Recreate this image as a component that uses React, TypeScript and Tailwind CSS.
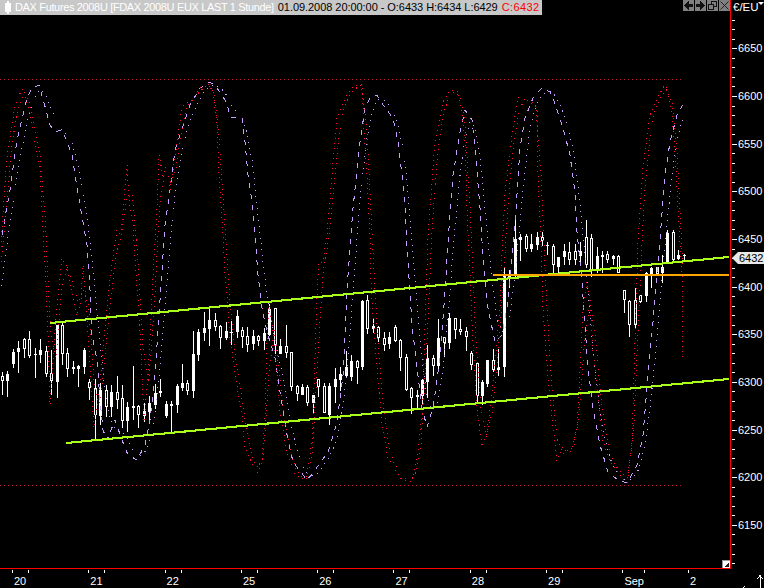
type Pt = [number, number];
type Bar = [number, number, number, number, number, number];

// candles as read off the chart: [x, wickTop, wickBottom, bodyTop, bodyBottom, hollow]
const scale = (x0: number, y0: number, rows: Bar[]): Bar[] =>
  rows.map(([x, a, b, c, d, h]) => [
    Math.floor(x0 + x / 3),
    y0 + a / 3,
    y0 + b / 3,
    y0 + c / 3,
    y0 + d / 3,
    h,
  ]);

const bars: Bar[] = [
  ...scale(0, 300, [
    [4, 217, 285, 228, 243, 1], [19, 213, 291, 222, 243, 0], [37, 148, 204, 155, 192, 0], [52, 123, 219, 143, 156, 0],
    [70, 115, 174, 117, 147, 1], [85, 93, 173, 117, 167, 1], [103, 143, 234, 162, 165, 0], [118, 117, 190, 150, 165, 0],
    [136, 138, 231, 153, 222, 1], [151, 150, 285, 219, 243, 1], [169, 75, 294, 75, 246, 0], [184, 66, 195, 75, 162, 1],
    [199, 144, 231, 159, 207, 1], [217, 183, 222, 201, 207, 0], [232, 195, 261, 198, 207, 0], [250, 144, 222, 150, 201, 0],
    [265, 237, 300, 246, 264, 1], [283, 237, 420, 264, 345, 1], [298, 250, 375, 270, 348, 0], [316, 255, 351, 270, 321, 1],
    [331, 255, 351, 276, 321, 0], [349, 228, 327, 276, 300, 1], [364, 255, 384, 294, 363, 1], [379, 306, 396, 321, 363, 0],
    [397, 198, 360, 318, 324, 0], [412, 315, 384, 318, 345, 1], [430, 309, 366, 333, 348, 0], [445, 288, 366, 309, 336, 0],
    [463, 252, 327, 279, 315, 0], [478, 237, 291, 273, 279, 0], [496, 303, 354, 312, 348, 0], [511, 303, 396, 312, 318, 0],
    [529, 252, 339, 258, 315, 0], [544, 192, 273, 249, 264, 0], [559, 240, 285, 249, 273, 1], [577, 93, 294, 162, 273, 0],
    [592, 87, 183, 96, 165, 0], [610, 36, 123, 84, 99, 0], [625, 27, 138, 60, 87, 0], [643, 39, 93, 60, 81, 1],
    [658, 75, 147, 78, 114, 1], [676, 66, 120, 93, 114, 0], [691, 63, 135, 96, 99, 0], [709, 30, 114, 48, 96, 0],
    [724, 81, 144, 90, 111, 1], [739, 81, 156, 108, 135, 1], [757, 90, 150, 108, 132, 0], [772, 105, 138, 108, 123, 1],
  ]),
  ...scale(250, 290, [
    [40, 114, 180, 129, 153, 0], [55, 42, 138, 57, 135, 0], [73, 54, 192, 54, 165, 1], [88, 147, 192, 168, 192, 0],
    [106, 105, 204, 168, 189, 1], [121, 186, 303, 186, 291, 1], [139, 285, 333, 288, 312, 1], [154, 282, 315, 291, 315, 0],
    [169, 285, 348, 291, 339, 1], [187, 315, 369, 315, 339, 0], [202, 267, 321, 267, 291, 1], [220, 279, 369, 288, 369, 1],
    [235, 279, 405, 288, 375, 0], [253, 234, 339, 267, 291, 0], [268, 231, 303, 252, 270, 0], [286, 183, 261, 231, 258, 0],
    [301, 195, 273, 213, 261, 0], [319, 210, 282, 213, 234, 1], [334, 30, 240, 33, 231, 0], [349, 15, 132, 30, 117, 1],
    [367, 87, 129, 108, 117, 0], [382, 108, 156, 111, 144, 1], [400, 126, 183, 144, 165, 1], [415, 126, 177, 141, 162, 0],
    [433, 105, 156, 111, 153, 1], [448, 147, 243, 150, 204, 1], [466, 192, 303, 201, 300, 1], [481, 291, 372, 294, 324, 1],
    [499, 300, 360, 315, 321, 0], [514, 267, 345, 270, 318, 0], [529, 165, 324, 204, 276, 0], [547, 195, 258, 204, 228, 1],
    [562, 87, 237, 144, 228, 0], [580, 141, 201, 141, 159, 1], [595, 69, 177, 84, 159, 0], [613, 84, 147, 84, 120, 1],
    [628, 87, 135, 117, 126, 1], [646, 111, 183, 123, 141, 1], [661, 183, 240, 189, 225, 1], [679, 219, 340, 219, 318, 1],
    [694, 270, 345, 276, 318, 0], [709, 210, 291, 210, 282, 0], [727, 177, 246, 210, 240, 1], [742, 177, 258, 231, 240, 0],
  ]),
  ...scale(480, 210, [
    [69, 174, 501, 198, 471, 0], [85, 180, 234, 198, 207, 0], [103, 20, 205, 87, 193, 0], [118, 72, 153, 81, 90, 0],
    [136, 72, 126, 78, 117, 1], [151, 72, 126, 102, 117, 0], [169, 66, 120, 81, 105, 0], [184, 66, 108, 81, 93, 1],
    [199, 96, 135, 105, 108, 0], [217, 102, 190, 108, 165, 1], [232, 141, 190, 141, 171, 0], [250, 102, 165, 123, 141, 0],
    [265, 96, 165, 126, 150, 1], [283, 102, 165, 123, 150, 1], [298, 96, 165, 123, 138, 0], [316, 30, 175, 81, 165, 1],
    [331, 72, 200, 84, 180, 1], [349, 111, 190, 138, 180, 0], [364, 123, 190, 135, 141, 0], [379, 123, 160, 132, 150, 1],
    [397, 135, 165, 138, 147, 0], [412, 135, 190, 138, 190, 1], [430, 240, 310, 240, 270, 1], [445, 270, 380, 273, 345, 1],
    [463, 235, 355, 270, 345, 1], [478, 255, 280, 255, 275, 1], [496, 185, 275, 188, 258, 0], [511, 170, 235, 174, 192, 0],
    [529, 170, 195, 170, 192, 1], [544, 135, 218, 172, 190, 0], [559, 60, 160, 69, 160, 0], [577, 60, 155, 66, 150, 1],
    [592, 120, 150, 135, 147, 0], [610, 132, 155, 135, 138, 0],
  ]),
];

const redTrace: Pt[] = [
  [-6, 300], [1, 247], [4, 198], [7, 158], [10, 138], [15, 105], [22, 89], [24, 90], [28, 107], [33, 132], [40, 168], [42, 208], [44, 248], [46, 282], [48, 335], [50, 405],
  [56, 318], [62, 258], [66, 265], [72, 290], [77, 316], [81, 300], [83, 265], [87, 315], [90, 365], [94, 428], [100, 382], [107, 308], [112, 262], [117, 230], [121, 236], [127, 165], [129, 200], [133, 225], [136, 275], [139, 310], [142, 375], [144, 422],
  [148, 375], [153, 275], [157, 208], [159, 155], [163, 176], [167, 176], [170, 190], [175, 158], [182, 107], [190, 100], [200, 88], [208, 83], [213, 92], [217, 125], [219, 175], [222, 218], [225, 275], [228, 308], [230, 338],
  [233, 358], [238, 392], [242, 415], [245, 448], [252, 463], [257, 473], [262, 462], [265, 415], [267, 342], [269, 305], [273, 332], [277, 375], [280, 412], [287, 452], [295, 475], [306, 480], [312, 442], [315, 358], [317, 295], [319, 262], [323, 262], [327, 235], [332, 175], [337, 118], [345, 98], [353, 87], [362, 84], [364, 132], [367, 175], [370, 235], [371, 282], [373, 315], [377, 368], [382, 425], [388, 458], [402, 480], [412, 482], [418, 452], [422, 415], [425, 325], [428, 235], [435, 142], [443, 102], [450, 90], [458, 92], [462, 115], [465, 142], [467, 208], [470, 275], [472, 325], [477, 408], [482, 447], [487, 432], [493, 385], [500, 308], [502, 255], [505, 192], [512, 135], [518, 97], [530, 102], [537, 108], [538, 175], [541, 242], [543, 308], [547, 365], [552, 418], [557, 461], [563, 447], [570, 455], [577, 428], [583, 308], [587, 282], [590, 302], [593, 352], [597, 385], [603, 442], [612, 465], [627, 483], [632, 442], [638, 242], [643, 168], [650, 115], [657, 98], [665, 85], [668, 92], [672, 115], [675, 152], [678, 208], [682, 275], [683, 357],
];

const purpleTrace: Pt[] = [
  [-8, 320], [2, 235], [10, 190], [17, 140], [27, 98], [32, 88], [39, 85], [46, 110], [50, 125], [55, 132], [61, 130], [65, 137], [72, 155], [75, 175], [80, 205], [87, 245], [90, 290], [92, 335], [97, 360], [100, 400], [103, 430], [107, 440], [115, 420], [122, 440], [128, 455], [137, 460], [145, 445], [150, 420], [155, 375], [160, 300], [165, 225], [170, 190], [175, 150], [185, 120], [190, 105], [200, 88], [210, 82], [217, 88], [227, 103], [230, 117], [242, 118], [245, 142], [248, 175], [252, 202], [255, 235], [258, 275], [262, 308], [267, 332], [275, 358], [280, 392], [287, 435], [293, 462], [307, 480], [313, 473], [320, 463], [328, 452], [337, 422], [343, 375], [348, 275], [353, 208], [360, 142], [365, 108], [370, 98], [377, 95], [383, 105], [393, 118], [398, 142], [402, 175], [405, 208], [407, 248], [410, 292], [412, 325], [417, 368], [422, 408], [427, 427], [433, 408], [440, 358], [445, 292], [448, 242], [453, 175], [460, 132], [465, 110], [472, 120], [475, 148], [480, 208], [483, 258], [488, 308], [495, 342], [502, 335], [507, 308], [515, 225], [520, 148], [525, 118], [533, 98], [542, 88], [550, 92], [553, 98], [563, 128], [570, 155], [575, 192], [577, 232], [582, 282], [585, 325], [588, 368], [593, 408], [600, 445], [608, 472], [618, 480], [627, 483], [637, 465], [643, 435], [648, 375], [653, 322], [658, 265], [665, 175], [670, 142], [677, 115], [683, 104],
];

// the slower line of each pair is the faster one averaged over the last few bars
const yAt = (trace: Pt[], x: number) => {
  for (let i = 1; i < trace.length; i++) {
    if (x <= trace[i][0]) {
      const [x0, y0] = trace[i - 1];
      const [x1, y1] = trace[i];
      return y0 + ((y1 - y0) * (x - x0)) / (x1 - x0 || 1);
    }
  }
  return trace[trace.length - 1][1];
};

const slow = (trace: Pt[], n: number): Pt[] => {
  const out: Pt[] = [];
  for (let x = 1.5; x <= 684; x += 5.45) {
    let sum = 0;
    for (let k = 0; k < n; k++) sum += yAt(trace, x - k * 5.45);
    out.push([x, sum / n]);
  }
  return out;
};

const toPoints = (trace: Pt[]) => trace.map(([x, y]) => `${x},${y}`).join(" ");

const days = ["20", "21", "22", "25", "26", "27", "28", "29"];

const ticks: number[] = [];
for (let p = 6680; p >= 6110; p -= 10) ticks.push(p);

const Chart = () => (
  <svg width="730" height="568" className="block" shapeRendering="crispEdges" fill="none">
    {bars.map(([x, a, b, c, d, h]) => (
      <g key={x}>
        <rect x={x + 1} y={a} width="1" height={b - a} fill="#fff" />
        <rect x={x} y={c} width="3" height={Math.max(d - c, 1)} fill="#fff" />
        {h === 1 && d - c > 2 && <rect x={x + 1} y={c + 1} width="1" height={d - c - 2} fill="#000" />}
      </g>
    ))}
    <line x1="0" y1="79.5" x2="683" y2="79.5" stroke="#c8143c" strokeDasharray="1 3" />
    <line x1="0" y1="485.5" x2="683" y2="485.5" stroke="#c8143c" strokeDasharray="1 3" />
    <polyline points={toPoints(slow(purpleTrace, 3))} stroke="#c8a0ff" strokeDasharray="1 5" />
    <polyline points={toPoints(purpleTrace.filter(([x]) => x >= 0))} stroke="#c8a0ff" strokeDasharray="5 6" />
    <polyline points={toPoints(slow(redTrace, 2))} stroke="#ff0a3c" strokeDasharray="1 4" />
    <polyline points={toPoints(redTrace.filter(([x]) => x >= 0))} stroke="#ff0a3c" strokeDasharray="1 4" />
    <line x1="50" y1="323" x2="729" y2="257" stroke="#aaff1a" strokeWidth="2.1" />
    <line x1="66" y1="443" x2="729" y2="379" stroke="#aaff1a" strokeWidth="2.1" />
    <line x1="493" y1="275" x2="729" y2="275" stroke="#ffa500" strokeWidth="2" />
  </svg>
);

const WinButton = ({ children }: { children: React.ReactNode }) => (
  <div className="flex h-[11px] w-[11px] items-center justify-center bg-[#808080]">{children}</div>
);

export default function App() {
  return (
    <div className="flex h-[588px] w-[764px] flex-col overflow-hidden bg-black font-['Liberation_Sans',sans-serif] text-[11px] leading-none text-white">
      <div className="flex h-[569px] shrink-0">
        {/* plot area */}
        <div className="relative h-[569px] w-[731px] shrink-0 border-r border-b border-[#ff0000]">
          <Chart />

          <div className="absolute top-0 left-0 flex h-[15px] w-[542px] items-center overflow-hidden whitespace-nowrap bg-[#c8c8c8] pl-[5px]">
            <svg width="7" height="13" className="mr-[3px] shrink-0" shapeRendering="crispEdges">
              <rect x="0" y="2" width="6" height="9" fill="#fff" />
              <rect x="2" y="0" width="2" height="13" fill="#fff" />
            </svg>
            <span className="tracking-[-0.35px]">DAX Futures 2008U [FDAX 2008U EUX LAST 1 Stunde]</span>
            <span className="ml-[4px] tracking-[-0.05px] text-black">01.09.2008 20:00:00 - O:6433 H:6434 L:6429</span>
            <span className="ml-[4px] tracking-[0.4px] text-[#ff0000]">C:6432</span>
          </div>

          <div className="absolute top-0 right-0 flex gap-px">
            <WinButton>
              <svg width="9" height="9" viewBox="0 0 9 9" shapeRendering="crispEdges">
                <path d="M0 4h1V3h1V2h1V1h1V0h1v3h4v3H5v3H4V8H3V7H2V6H1V5H0z" fill="#111" />
              </svg>
            </WinButton>
            <WinButton>
              <svg width="9" height="9" viewBox="0 0 9 9" shapeRendering="crispEdges">
                <path d="M9 4H8V3H7V2H6V1H5V0H4v3H0v3h4v3h1V8h1V7h1V6h1V5h1z" fill="#111" />
              </svg>
            </WinButton>
            <WinButton>
              <svg width="9" height="9" viewBox="0 0 9 9" fill="none" stroke="#111" shapeRendering="crispEdges">
                <rect x="3.5" y="0.5" width="5" height="5" />
                <rect x="0.5" y="3.5" width="5" height="5" fill="#808080" />
              </svg>
            </WinButton>
            <WinButton>
              <svg width="9" height="9" viewBox="0 0 9 9" stroke="#222">
                <path d="M0.5 0.5l8 8M8.5 0.5l-8 8" />
              </svg>
            </WinButton>
          </div>

          <div className="absolute right-0 bottom-0 h-[8px] w-[8px] bg-white">
            <svg width="8" height="8" viewBox="0 0 8 8" className="block" shapeRendering="crispEdges">
              <path d="M0 0h8v1H1v7H0z" fill="#999" />
              <path d="M2 7l5-5v5z" fill="#222" />
            </svg>
          </div>
        </div>

        {/* price axis */}
        <div className="relative flex w-[33px] shrink-0 flex-col overflow-hidden">
          <div className="flex h-[15.5px] shrink-0 items-start pt-[2px] pl-[2px] text-[11.5px]">€/EU</div>
          <div className="absolute top-[2px] right-0 h-0 w-0 border-x-[3px] border-t-[3px] border-x-transparent border-t-white" />
          {ticks.map((p) => (
            <div key={p} className="flex h-[9.54px] shrink-0 items-center pl-px">
              {p % 50 === 0 ? (
                <>
                  <div className="h-px w-[5px] bg-white" />
                  <span className="pl-px">{p}</span>
                </>
              ) : (
                <div className="h-px w-[3px] bg-white" />
              )}
            </div>
          ))}
          <div className="absolute top-[252px] left-px flex h-[12px] w-[34px] items-center bg-[#e8e8e8] pl-[7px] text-black [clip-path:polygon(0_50%,6px_0,100%_0,100%_100%,6px_100%)]">
            6432
          </div>
        </div>
      </div>

      {/* time axis */}
      <div className="relative flex pl-[12px]">
        {days.map((d) => (
          <div key={d} className="w-[76.3px] shrink-0">
            <div className="mt-px flex h-[3px] gap-[15px]">
              <div className="w-px bg-white" />
              <div className="w-px bg-white" />
            </div>
            <div className="mt-[3px] pl-[2px]">{d}</div>
          </div>
        ))}
        <div className="w-[65.6px] shrink-0">
          <div className="mt-px flex h-[3px] gap-[21px]">
            <div className="w-px bg-white" />
            <div className="w-px bg-white" />
          </div>
          <div className="mt-[3px] pl-[2px]">Sep</div>
        </div>
        <div className="w-[40px] shrink-0">
          <div className="mt-px h-[3px] w-px bg-white" />
          <div className="mt-[3px] pl-[2px]">2</div>
        </div>
        <svg width="6" height="14" viewBox="0 0 6 14" className="absolute top-[6px] right-[1px]" fill="none" stroke="#fff" shapeRendering="crispEdges">
          <path d="M3 14V1M0.5 4L3 0.5L5.5 4" />
        </svg>
        <svg width="4" height="3" className="absolute top-[17px] left-[742px]" stroke="#fff">
          <path d="M0 3L3 0" />
        </svg>
      </div>
    </div>
  );
}
